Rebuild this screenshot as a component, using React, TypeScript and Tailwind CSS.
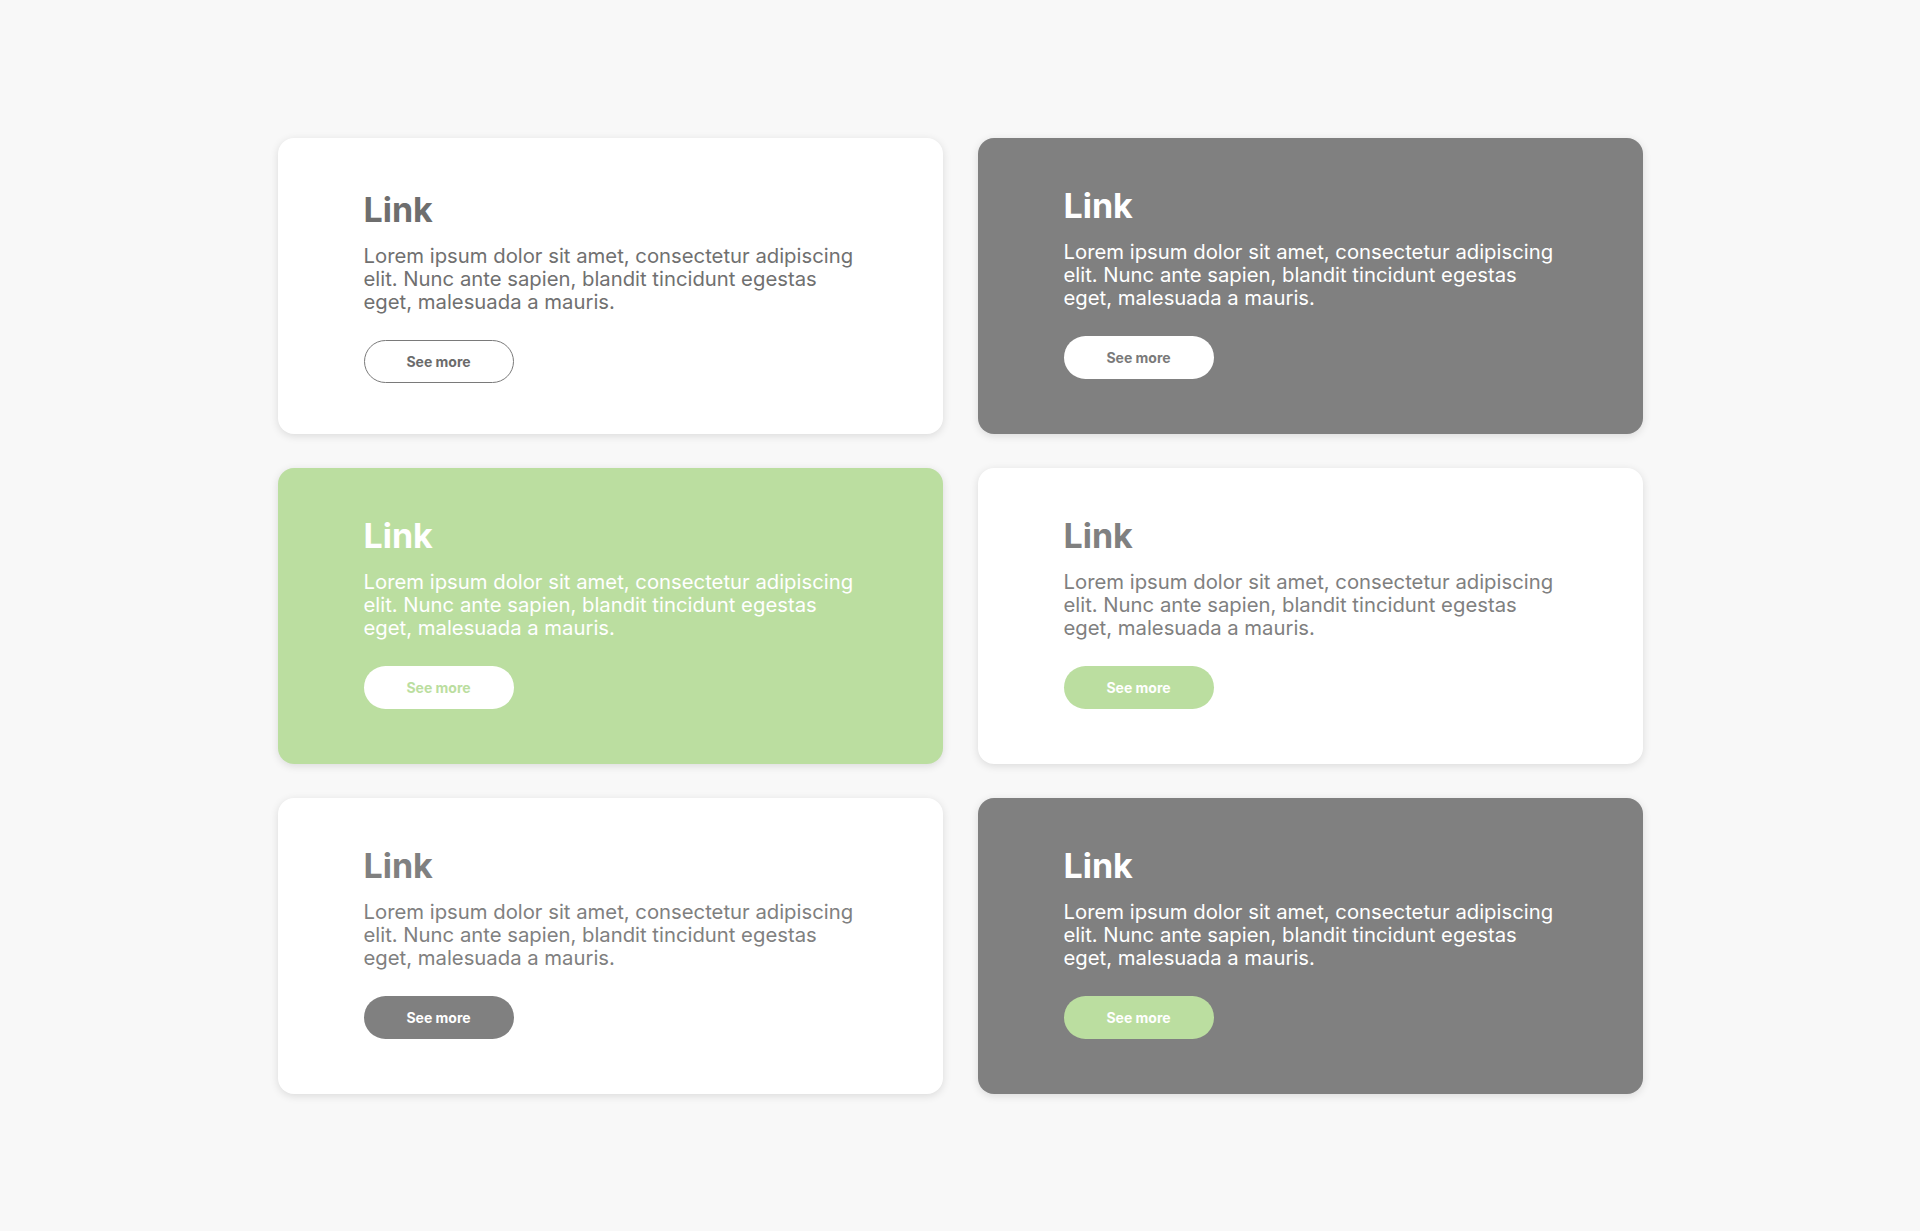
const lorem =
  'Lorem ipsum dolor sit amet, consectetur adipiscing elit. Nunc ante sapien, blandit tincidunt egestas eget, malesuada a mauris.'

type Variant = {
  card: string
  title: string
  body: string
  button: string
}

const cards: Variant[] = [
  {
    card: 'bg-white pt-[55px]',
    title: 'text-[#6e6e6e]',
    body: 'text-[#707070]',
    button: 'border border-[#7a7a7a] bg-white text-[#6b6b6b]',
  },
  {
    card: 'bg-[#808080] pt-[51px]',
    title: 'text-white',
    body: 'text-white',
    button: 'bg-white text-[#7a7a7a]',
  },
  {
    card: 'bg-[#bbdea0] pt-[51px]',
    title: 'text-white',
    body: 'text-white',
    button: 'bg-white text-[#bbdea0]',
  },
  {
    card: 'bg-white pt-[51px]',
    title: 'text-[#808080]',
    body: 'text-[#808080]',
    button: 'bg-[#bbdea0] text-white',
  },
  {
    card: 'bg-white pt-[51px]',
    title: 'text-[#808080]',
    body: 'text-[#808080]',
    button: 'bg-[#808080] text-white',
  },
  {
    card: 'bg-[#808080] pt-[51px]',
    title: 'text-white',
    body: 'text-white',
    button: 'bg-[#bbdea0] text-white',
  },
]

function LinkCard({ v }: { v: Variant }) {
  return (
    <div
      className={`h-[296px] rounded-2xl pl-[86px] pr-[60px] shadow-[0_2px_8px_rgba(0,0,0,0.12)] ${v.card}`}
    >
      <h3 className={`text-[34px] font-bold leading-[34px] ${v.title}`}>Link</h3>
      <p className={`mt-[17px] max-w-[498px] text-[20.3px] leading-[23px] ${v.body}`}>{lorem}</p>
      <button
        className={`mt-[27px] flex h-[43px] w-[150px] items-center justify-center rounded-full text-[14px] font-bold ${v.button}`}
      >
        See more
      </button>
    </div>
  )
}

export default function App() {
  return (
    <div className="min-h-[1231px] bg-[#f8f8f8] pt-[138px] font-['Inter',sans-serif]">
      <div className="mx-auto grid w-[1365px] grid-cols-2 gap-x-[35px] gap-y-[34px]">
        {cards.map((v, i) => (
          <LinkCard key={i} v={v} />
        ))}
      </div>
    </div>
  )
}
